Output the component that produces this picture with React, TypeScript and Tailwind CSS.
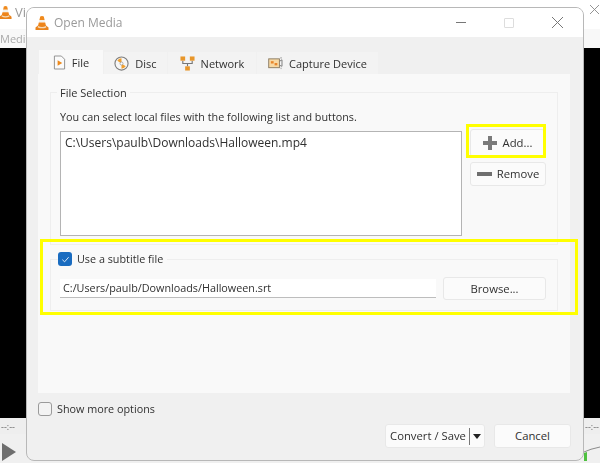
import React from "react";

const Cone = ({ className }: { className: string }) => (
  <svg viewBox="0 0 14 16" className={className}>
    <path d="M5.2 1.5 Q7 .6 8.8 1.5 L9.6 5 H4.4Z" fill="#f08a1c" />
    <path d="M4.4 5 H9.6 L10.2 7.6 H3.8Z" fill="#f3f0ea" />
    <path d="M3.8 7.6 H10.2 L11 11 H3Z" fill="#ef8418" />
    <path d="M3 10.5 H11 L13.5 12.5 V15 H.5 V12.5Z" fill="#e9831c" />
    <path d="M3 11 Q7 13.2 11 11 L11.3 12.4 Q7 14.2 2.7 12.4Z" fill="#f7d9b4" />
  </svg>
);

const FileIcon = () => (
  <svg viewBox="0 0 14 16" className="w-[13px] h-[15px]">
    <path d="M1.5 1 H9 L12.5 4.5 V15 H1.5Z" fill="#fbfbfb" stroke="#8c8c8c" strokeWidth="1" />
    <path d="M5 5.5 L10 8.5 L5 11.5Z" fill="#ee8a1c" />
  </svg>
);

const DiscIcon = () => (
  <svg viewBox="0 0 16 16" className="w-[15px] h-[15px]">
    <circle cx="8" cy="8" r="7" fill="#f6f6f6" stroke="#7d7d7d" strokeWidth="1.2" />
    <path d="M8 8 L3.5 5 A5.5 5.5 0 0 1 8 2.5Z" fill="#f0a030" />
    <path d="M8 8 L12.5 11 A5.5 5.5 0 0 1 8 13.5Z" fill="#f0a030" />
    <circle cx="8" cy="8" r="1.6" fill="#fff" stroke="#8a8a8a" strokeWidth="0.7" />
  </svg>
);

const NetIcon = () => (
  <svg viewBox="0 0 16 16" className="w-[15px] h-[15px]">
    <path d="M3 5 V8 H13 V5 M8 8 V11" fill="none" stroke="#777" strokeWidth="1.2" />
    <rect x="0.5" y="0.5" width="5" height="4.5" fill="#e8962a" />
    <rect x="10.5" y="0.5" width="5" height="4.5" fill="#e8962a" />
    <rect x="5.5" y="11" width="5" height="4.5" fill="#e8962a" />
  </svg>
);

const CaptureIcon = () => (
  <svg viewBox="0 0 16 14" className="w-[15px] h-[13px]">
    <rect x="0.7" y="2" width="11.5" height="9.5" fill="#f8d9a4" stroke="#8a7a60" strokeWidth="1" />
    <rect x="3" y="4.5" width="3" height="2.5" fill="#e8862a" />
    <rect x="7" y="6.5" width="3" height="2.5" fill="#e8862a" />
    <path d="M12.5 4.5 L15 3 V10 L12.5 9" fill="none" stroke="#777" strokeWidth="1" />
    <path d="M13 1 H15 M14 11.5 V13" stroke="#999" strokeWidth="1" />
  </svg>
);

const Tab = ({ active, icon, label, width }: { active?: boolean; icon: React.ReactNode; label: string; width: string }) => (
  <div
    className={
      active
        ? `${width} h-[24px] bg-[#f9f9f9] flex items-center justify-center gap-[6px]`
        : `${width} h-[22px] bg-[#f3f3f3] flex items-center justify-center gap-[6px]`
    }
  >
    {icon}
    <span>{label}</span>
  </div>
);

const Btn = ({ className, children }: { className: string; children: React.ReactNode }) => (
  <div
    className={`flex items-center justify-center bg-[#fbfbfb] border border-[#e8e8e8] rounded-[3px] text-[11.3px] ${className}`}
  >
    {children}
  </div>
);

export default function App() {
  return (
    <div
      className="relative w-[600px] h-[463px] overflow-hidden bg-[#f0f0f0] text-[10.8px] leading-none text-[#303030] flex flex-col"
      style={{ fontFamily: '"Open Sans", "Noto Sans", sans-serif' }}
    >
      {/* Main VLC window behind */}
      <div className="h-[30px] bg-white flex items-center justify-between shrink-0 blur-[0.5px]">
        <div className="flex items-center gap-[3px] -ml-[1px] -mt-[5px]">
          <Cone className="w-[13px] h-[15px]" />
          <span className="text-[13px] text-[#999]">Vi</span>
        </div>
        <svg viewBox="0 0 10 10" className="w-[9px] h-[9px] mr-[1px] -mt-[12px]">
          <path d="M0 0 L10 10 M10 0 L0 10" stroke="#888" strokeWidth="1" />
        </svg>
      </div>
      <div className="h-[19px] bg-[#f8f8f8] text-[#aaa] text-[11px] flex items-center -mt-[1px] shrink-0 blur-[0.4px]">
        Media
      </div>
      <div className="h-[370px] bg-black shrink-0" />
      <div className="flex-1 bg-[#f0f0f0] flex flex-col relative blur-[0.4px]">
        <div className="flex justify-between px-[1px] h-[16px] items-center text-[#666] text-[9px] bg-[#eeeeee]">
          <span>--:--</span>
          <span>--:--</span>
        </div>
        <div className="mt-[9px] ml-[2px]">
          <svg viewBox="0 0 14 18" className="w-[14px] h-[18px]">
            <path d="M0 0 L14 9 L0 18Z" fill="#6e6e6e" />
          </svg>
        </div>
        <svg viewBox="0 0 16 16" className="absolute right-0 bottom-[1px] w-[16px] h-[16px]">
          <path d="M0 6 Q6 3 16 1" fill="none" stroke="#8a8a8a" strokeWidth="1" />
          <path d="M0 7 L3 6 V15 H0Z" fill="#4fc040" />
        </svg>
      </div>

      {/* Open Media dialog */}
      <div className="absolute left-[26px] top-[7px] w-[558px] h-[454px] rounded-[8px] overflow-hidden border border-[#b8b8b8] bg-[#f0f0f0] flex flex-col blur-[0.4px]">
        {/* title bar */}
        <div className="h-[29px] bg-white flex items-center justify-between shrink-0">
          <div className="flex items-center gap-[5px] pl-[8px]">
            <Cone className="w-[14px] h-[16px]" />
            <span className="text-[12px] text-[#9a9a9a]">Open Media</span>
          </div>
          <div className="flex items-center pr-[20px] gap-[38px]">
            <div className="w-[10px] h-px bg-[#777]" />
            <div className="w-[10px] h-[10px] border border-[#ddd] rounded-[1px]" />
            <svg viewBox="0 0 11 11" className="w-[11px] h-[11px]">
              <path d="M0 0 L11 11 M11 0 L0 11" stroke="#777" strokeWidth="1" />
            </svg>
          </div>
        </div>

        {/* tabs */}
        <div className="flex items-end gap-px ml-[12px] mt-[13px] shrink-0 text-[11px]">
          <Tab active icon={<FileIcon />} label="File" width="w-[64px]" />
          <Tab icon={<DiscIcon />} label="Disc" width="w-[63px]" />
          <Tab icon={<NetIcon />} label="Network" width="w-[88px]" />
          <Tab icon={<CaptureIcon />} label="Capture Device" width="w-[121px]" />
        </div>

        {/* tab panel */}
        <div className="mx-[11px] w-[532px] h-[319px] bg-[#f9f9f9] px-[12px] pt-[18px] shrink-0 flex flex-col">
          {/* File Selection */}
          <div className="w-[508px] h-[153px] border border-[#eeeeee] relative shrink-0 pt-[19px] px-[9px]">
            <span className="absolute left-[6px] -top-[6px] px-[3px] bg-[#f9f9f9] text-[11px]">File Selection</span>
            <p>You can select local files with the following list and buttons.</p>
            <div className="flex mt-[8px] gap-[8px]">
              <div className="w-[402px] h-[105px] bg-white border border-[#b4b4b4] pl-[4px] pt-[5px] text-[12px]">
                C:\Users\paulb\Downloads\Halloween.mp4
              </div>
              <div className="flex flex-col gap-[5px]">
                <Btn className="w-[75px] h-[28px] gap-[6px] -mt-[2px]">
                  <svg viewBox="0 0 14 14" className="w-[14px] h-[14px]">
                    <path d="M5 0 H9 V5 H14 V9 H9 V14 H5 V9 H0 V5 H5Z" fill="#7a7a7a" />
                  </svg>
                  <span>Add...</span>
                </Btn>
                <Btn className="w-[76px] h-[24px] gap-[5px]">
                  <div className="w-[15px] h-[4px] bg-[#6f6f6f]" />
                  <span>Remove</span>
                </Btn>
              </div>
            </div>
          </div>

          {/* Subtitle */}
          <div className="w-[508px] h-[52px] mt-[14px] border border-[#eeeeee] relative shrink-0 px-[9px] pt-[19px] flex gap-[7px]">
            <div className="absolute left-[7px] -top-[8px] flex items-center gap-[5px] bg-[#f9f9f9] pr-[4px]">
              <div className="w-[14px] h-[14px] rounded-[3px] bg-[#1a6cc0] flex items-center justify-center">
                <svg viewBox="0 0 10 10" className="w-[9px] h-[9px]">
                  <path d="M1.5 5.2 L4 7.6 L8.5 2.4" fill="none" stroke="#dbe8f5" strokeWidth="1.1" />
                </svg>
              </div>
              <span>Use a subtitle file</span>
            </div>
            <div className="w-[376px] h-[19px] bg-white border-b border-[#bdbdbd] pl-[3px] flex items-center">
              C:/Users/paulb/Downloads/Halloween.srt
            </div>
            <Btn className="w-[103px] h-[23px] -mt-[2px]">Browse...</Btn>
          </div>
        </div>

        {/* footer */}
        <div className="flex-1 relative flex items-start justify-between pl-[11px] pr-[12px]">
          <div className="flex items-center gap-[5px] mt-[9px]">
            <div className="w-[14px] h-[14px] rounded-[3px] border border-[#9a9a9a] bg-[#f3f3f3]" />
            <span>Show more options</span>
          </div>
          <div className="flex gap-[9px] mt-[31px]">
            <Btn className="w-[100px] h-[24px]">
              <span className="pl-[1px]">Convert / Save</span>
              <div className="w-px h-[17px] bg-[#777] ml-[3px] mr-[3px]" />
              <svg viewBox="0 0 8 5" className="w-[8px] h-[5px]">
                <path d="M0 0 H8 L4 5Z" fill="#222" />
              </svg>
            </Btn>
            <Btn className="w-[77px] h-[24px]">Cancel</Btn>
          </div>
        </div>
      </div>

      {/* Yellow highlights */}
      <div className="absolute left-[466px] top-[124px] w-[80px] h-[34px] border-[3px] border-[#ffff00] pointer-events-none" />
      <div className="absolute left-[40px] top-[239px] w-[538px] h-[76px] border-[3px] border-[#ffff00] pointer-events-none" />
    </div>
  );
}
